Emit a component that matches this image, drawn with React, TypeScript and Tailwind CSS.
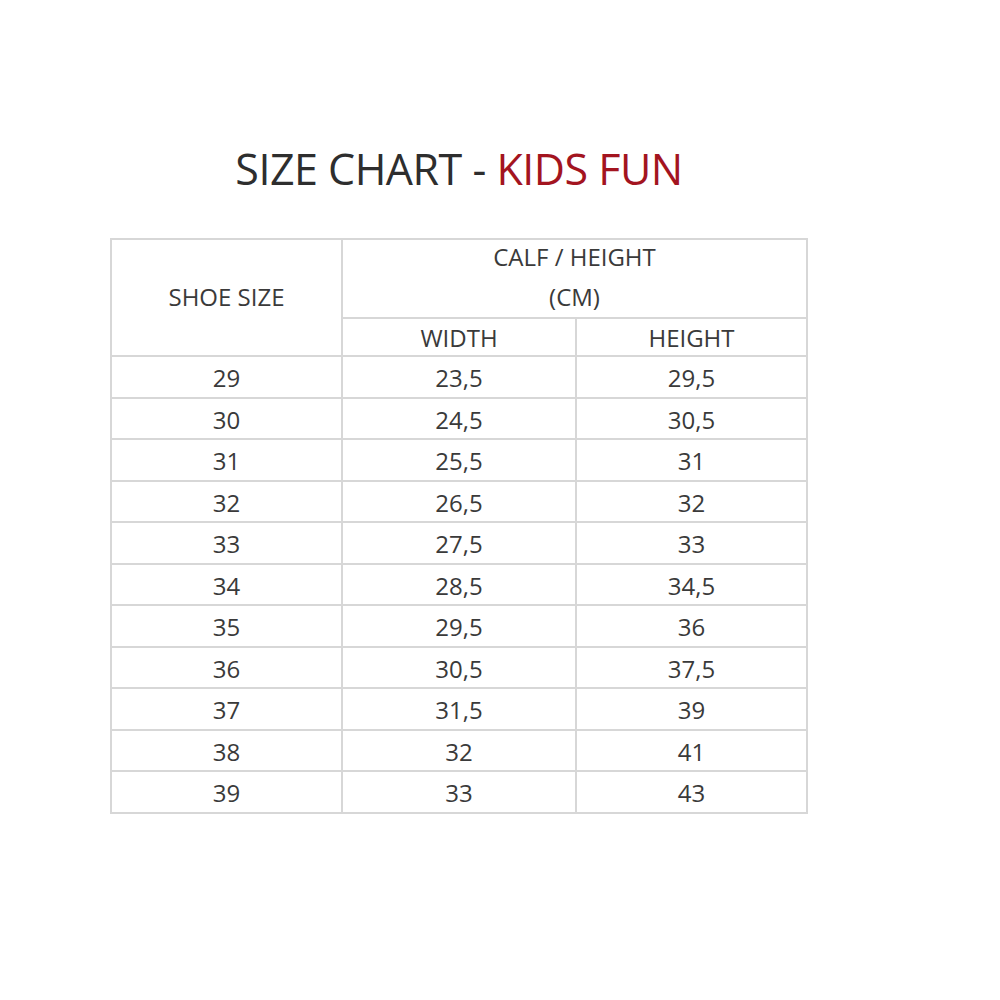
import { Fragment } from 'react'

const rows: [string, string, string][] = [
  ['29', '23,5', '29,5'],
  ['30', '24,5', '30,5'],
  ['31', '25,5', '31'],
  ['32', '26,5', '32'],
  ['33', '27,5', '33'],
  ['34', '28,5', '34,5'],
  ['35', '29,5', '36'],
  ['36', '30,5', '37,5'],
  ['37', '31,5', '39'],
  ['38', '32', '41'],
  ['39', '33', '43'],
]

export default function App() {
  return (
    <div className="w-[1000px] h-[1000px] bg-white text-[#3a3a3a]"
      style={{ fontFamily: '"Open Sans", "Liberation Sans", sans-serif' }}>
      <div className="ml-[110px] w-[698px] pt-[140px]">
        <h1 className="text-center text-[43px] leading-[58px] tracking-[-0.5px] text-[#2e2e2e]">
          SIZE CHART - <span className="text-[#a3141f]">KIDS FUN</span>
        </h1>

        <div className="mt-[40px] grid grid-cols-[229px_232px_229px] grid-rows-[77px_36px] auto-rows-[39.5px] gap-[2px] p-[2px] bg-[#d7d7d7] text-[24px]">
          <div className="row-span-2 bg-white flex items-center justify-center pb-[1px]">SHOE SIZE</div>
          <div className="col-span-2 bg-white flex flex-col items-center justify-center leading-[40px] pb-[3px]">
            <span>CALF / HEIGHT</span>
            <span>(CM)</span>
          </div>
          <div className="bg-white flex items-center justify-center pt-[1px]">WIDTH</div>
          <div className="bg-white flex items-center justify-center pt-[1px]">HEIGHT</div>
          {rows.map(([size, w, h]) => (
            <Fragment key={size}>
              <div className="bg-white flex items-center justify-center pt-[3px]">{size}</div>
              <div className="bg-white flex items-center justify-center pt-[3px]">{w}</div>
              <div className="bg-white flex items-center justify-center pt-[3px]">{h}</div>
            </Fragment>
          ))}
        </div>
      </div>
    </div>
  )
}
